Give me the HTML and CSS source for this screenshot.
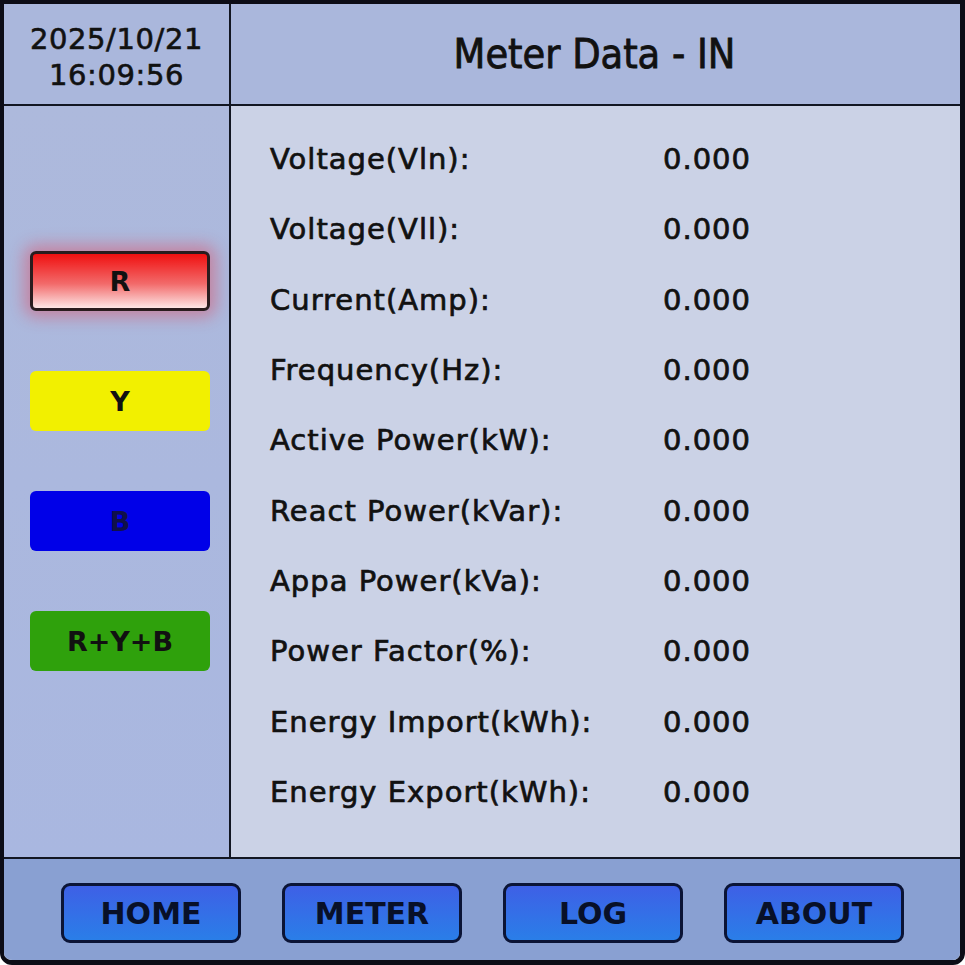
FILE: index.html
```html
<!DOCTYPE html>
<html lang="en">

<head>
    <meta charset="UTF-8">
    <meta name="viewport" content="width=device-width, initial-scale=1.0">
    <title>Meter Data - IN</title>
    <link rel="stylesheet" href="styles.css">
</head>

<body>

    <div class="panel">
        <!-- Fecha y hora -->
        <div class="clock">
            <span>2025/10/21</span>
            <span>16:09:56</span>
        </div>
        <div class="title">
            <h1>Meter Data - IN</h1>
        </div>

        <!-- Selector de fase -->
        <div class="phases">
            <button class="phase phase-r">R</button>
            <button class="phase phase-y">Y</button>
            <button class="phase phase-b">B</button>
            <button class="phase phase-all">R+Y+B</button>
        </div>

        <!-- Lecturas -->
        <div class="readings">
            <div class="row"><span class="label">Voltage(Vln):</span><span class="value">0.000</span></div>
            <div class="row"><span class="label">Voltage(Vll):</span><span class="value">0.000</span></div>
            <div class="row"><span class="label">Current(Amp):</span><span class="value">0.000</span></div>
            <div class="row"><span class="label">Frequency(Hz):</span><span class="value">0.000</span></div>
            <div class="row"><span class="label">Active Power(kW):</span><span class="value">0.000</span></div>
            <div class="row"><span class="label">React Power(kVar):</span><span class="value">0.000</span></div>
            <div class="row"><span class="label">Appa Power(kVa):</span><span class="value">0.000</span></div>
            <div class="row"><span class="label">Power Factor(%):</span><span class="value">0.000</span></div>
            <div class="row"><span class="label">Energy Import(kWh):</span><span class="value">0.000</span></div>
            <div class="row"><span class="label">Energy Export(kWh):</span><span class="value">0.000</span></div>
        </div>

        <!-- Navegacion -->
        <nav class="footer">
            <button class="nav-btn">HOME</button>
            <button class="nav-btn">METER</button>
            <button class="nav-btn">LOG</button>
            <button class="nav-btn">ABOUT</button>
        </nav>
    </div>

</body>

</html>
```

FILE: styles.css
```css
/* Estilos generales */
body {
    margin: 0;
    padding: 0;
    background-color: #ffffff;
    font-family: 'DejaVu Sans', sans-serif;
    color: #111;
}

/* Marco de la pantalla */
.panel {
    box-sizing: border-box;
    width: 965px;
    height: 965px;
    border: solid #0c0c16;
    border-width: 4px 5px 5px 4px;
    border-radius: 0 0 12px 12px;
    display: grid;
    grid-template-columns: 227px 1fr;
    grid-template-rows: 102px 751px 1fr;
    overflow: hidden;
}

/* Cabecera */
.clock {
    box-sizing: border-box;
    background-color: #aab7dc;
    border-right: 2px solid #121622;
    border-bottom: 2px solid #121622;
    display: flex;
    flex-direction: column;
    align-items: center;
    justify-content: center;
    font-size: 29px;
    line-height: 36px;
    letter-spacing: 0.6px;
    -webkit-text-stroke: 0.6px #111;
    padding-top: 6px;
}

.title {
    background-color: #aab7dc;
    border-bottom: 2px solid #121622;
    display: flex;
    align-items: center;
    justify-content: center;
}

.title h1 {
    margin: 0;
    font-family: 'DejaVu Sans Condensed', 'DejaVu Sans', sans-serif;
    font-weight: normal;
    font-size: 41px;
    -webkit-text-stroke: 0.8px #111;
    padding-left: 4px;
    padding-right: 6px;
}

/* Columna de fases */
.phases {
    box-sizing: border-box;
    background: linear-gradient(#adb9dc, #a9b7e0);
    border-right: 2px solid #121622;
    padding: 145px 0 0 26px;
    display: flex;
    flex-direction: column;
    gap: 60px;
}

.phase {
    width: 180px;
    height: 60px;
    border: none;
    border-radius: 6px;
    font-family: 'DejaVu Sans', sans-serif;
    font-weight: bold;
    font-size: 27px;
    color: #111;
    padding: 0;
}

.phase-r {
    border: 3px solid #2a1c1e;
    background: linear-gradient(#f01010, #f26a6a 55%, #fde6e6);
    box-shadow: 0 0 16px 6px rgba(232, 50, 70, 0.4);
}

.phase-y {
    background-color: #f2f000;
}

.phase-b {
    background-color: #0000e8;
    color: #10104a;
}

.phase-all {
    background-color: #2fa10c;
}

/* Lecturas */
.readings {
    background-color: #cbd2e6;
    padding: 18px 0 0 39px;
}

.row {
    display: flex;
    align-items: center;
    height: 70.3px;
    font-size: 29px;
    letter-spacing: 1px;
    -webkit-text-stroke: 0.7px #111;
}

.label {
    width: 393px;
}

/* Barra inferior */
.footer {
    grid-column: 1 / 3;
    background-color: #89a0d2;
    border-top: 2px solid #121622;
    display: flex;
    gap: 41px;
    padding: 24px 0 0 57px;
}

.nav-btn {
    width: 180px;
    height: 60px;
    border: 3px solid #0b1436;
    border-radius: 9px;
    background: linear-gradient(#3e60e6, #2a7ee8);
    font-family: 'DejaVu Sans', sans-serif;
    font-weight: bold;
    font-size: 30px;
    color: #081028;
    padding: 0;
}
```
